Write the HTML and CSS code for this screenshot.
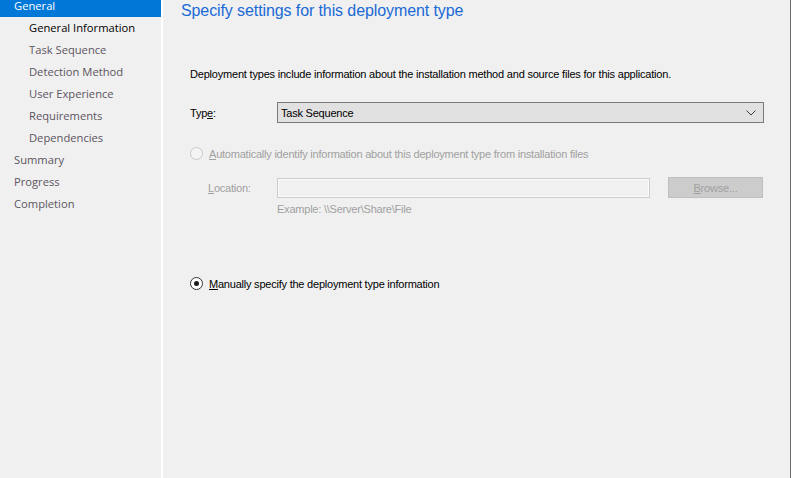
FILE: index.html
```html
<!DOCTYPE html>
<html>
<head>
<meta charset="utf-8">
<link rel="stylesheet" href="styles.css">
</head>
<body>
<div class="window">
  <nav class="sidebar">
    <ul class="steps">
      <li class="step active">General</li>
      <li class="step sub current">General Information</li>
      <li class="step sub">Task Sequence</li>
      <li class="step sub">Detection Method</li>
      <li class="step sub">User Experience</li>
      <li class="step sub">Requirements</li>
      <li class="step sub">Dependencies</li>
      <li class="step">Summary</li>
      <li class="step">Progress</li>
      <li class="step">Completion</li>
    </ul>
  </nav>
  <div class="divider"></div>
  <main class="content">
    <h1 class="title">Specify settings for this deployment type</h1>
    <p class="intro">Deployment types include information about the installation method and source files for this application.</p>
    <div class="row type-row">
      <label class="label">Typ<u>e</u>:</label>
      <div class="combo">
        <span class="combo-text">Task Sequence</span>
        <svg class="chev" width="10" height="6" viewBox="0 0 10 6"><path d="M0.5 0.5 L5 5 L9.5 0.5" fill="none" stroke="#404040" stroke-width="1"/></svg>
      </div>
    </div>
    <div class="radio-row disabled auto-row">
      <span class="radio"></span>
      <span class="radio-label"><u>A</u>utomatically identify information about this deployment type from installation files</span>
    </div>
    <div class="row loc-row">
      <label class="label loc-label disabled"><u>L</u>ocation:</label>
      <div class="loc-field">
        <div class="input"></div>
        <div class="example">Example: \\Server\Share\File</div>
      </div>
      <button class="browse"><u>B</u>rowse...</button>
    </div>
    <div class="radio-row manual-row">
      <span class="radio checked"></span>
      <span class="radio-label"><u>M</u>anually specify the deployment type information</span>
    </div>
  </main>
</div>
</body>
</html>
```

FILE: styles.css
```css
html, body {
  margin: 0;
  padding: 0;
  height: 100%;
  background: #f0f0f0;
}
.window {
  display: flex;
  height: 478px;
  width: 791px;
  box-sizing: border-box;
  border-right: 1px solid #6e6e6e;
  overflow: hidden;
  font-family: "Liberation Sans", Arial, sans-serif;
}
.sidebar {
  width: 161px;
  flex: none;
  background: #f0f0f0;
  font-family: "Open Sans", "Noto Sans", sans-serif;
  font-size: 11.2px;
}
.steps {
  list-style: none;
  margin: -5px 0 0 0;
  padding: 0;
}
.step {
  height: 22px;
  line-height: 22px;
  padding-left: 14px;
  color: #5c5560;
  white-space: nowrap;
}
.step.sub { padding-left: 29px; }
.step.active {
  background: #0078d7;
  color: #ffffff;
}
.step.current { color: #000000; }
.divider {
  width: 2px;
  flex: none;
  background: #ffffff;
}
.content {
  flex: 1;
  padding-left: 18px;
  font-size: 11px;
  color: #000;
  letter-spacing: -0.22px;
}
.title {
  margin: 0;
  font-family: "Liberation Sans", Arial, sans-serif;
  font-weight: normal;
  font-size: 16px;
  color: #1a6ad6;
  line-height: 20px;
  margin-top: 1px;
  letter-spacing: -0.1px;
}
.intro {
  margin: 47px 0 0 9px;
  line-height: 13px;
  letter-spacing: -0.2px;
}
.row {
  display: flex;
  align-items: flex-start;
}
.type-row {
  margin-top: 21px;
  margin-left: 9px;
  align-items: center;
}
.label {
  width: 87px;
  flex: none;
}
.combo {
  width: 487px;
  height: 21px;
  box-sizing: border-box;
  border: 1px solid #7a7a7a;
  background: #e1e1e1;
  display: flex;
  align-items: center;
  justify-content: space-between;
  padding: 0 7px 0 3px;
}
.radio-row {
  display: flex;
  align-items: center;
  margin-left: 9px;
}
.radio {
  width: 11px;
  height: 11px;
  border: 1px solid #333;
  border-radius: 50%;
  background: #fff;
  flex: none;
  position: relative;
  box-sizing: content-box;
}
.radio.checked::after {
  content: "";
  position: absolute;
  left: 3px;
  top: 3px;
  width: 5px;
  height: 5px;
  border-radius: 50%;
  background: #1a1a1a;
}
.radio-label { margin-left: 6px; }
.disabled { color: #a0a0a0; }
.disabled .radio {
  border-color: #c8c8c8;
  background: #f4f4f4;
}
.auto-row {
  margin-top: 24px;
}
.loc-row {
  margin-top: 18px;
  margin-left: 27px;
}
.loc-label {
  width: 69px;
  line-height: 20px;
}
.loc-field {
  width: 373px;
  flex: none;
}
.input {
  height: 20px;
  box-sizing: border-box;
  border: 1px solid #cccccc;
  background: #f0f0f0;
  box-shadow: inset 0 0 0 1px #fafafa;
}
.example {
  color: #a0a0a0;
  margin-top: 5px;
  line-height: 13px;
}
.browse {
  margin: -1px 0 0 18px;
  width: 95px;
  height: 21px;
  box-sizing: border-box;
  border: 1px solid #bfbfbf;
  background: #cccccc;
  color: #a0a0a0;
  font-family: "Liberation Sans", Arial, sans-serif;
  font-size: 11px;
  letter-spacing: -0.2px;
  padding: 0;
}
.manual-row {
  margin-top: 61px;
}
```
